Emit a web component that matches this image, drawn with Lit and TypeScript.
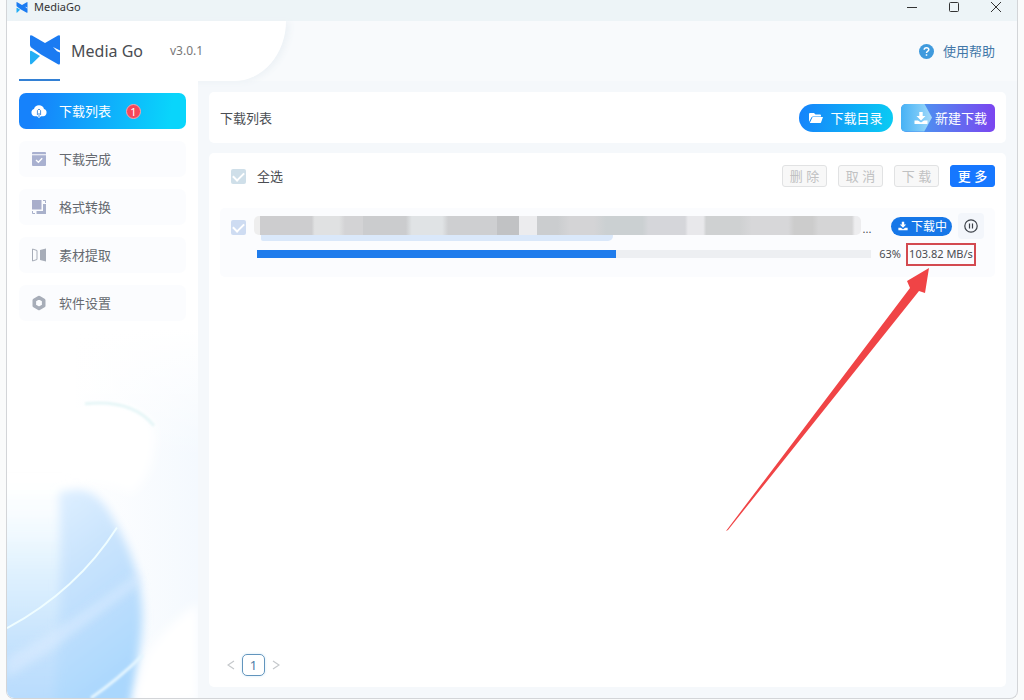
import { LitElement, html, css, svg } from "lit";
import { customElement, state } from "lit/decorators.js";
import { classMap } from "lit/directives/class-map.js";

const logo = (cls: string) => html`
  <svg class=${cls} viewBox="0 0 30 30" aria-hidden="true">
    <path d="M0 1.600Q0 -.6 2 .6L15 8L28 .6Q30 -.6 30 1.600V28Q30 30.400 28 29.200L11 19.500L1.200 12.400Q0 11.500 0 10Z" fill="#1b7bf2" />
    <path d="M0 17Q0 15 1.600 16L10 21L2 28.800Q0 30.400 0 28Z" fill="#22aef5" />
    <path d="M23 12L30 15.600V17.600L27 16.200Z" fill="#fff" />
  </svg>`;

const navIcons = [
  svg`<path d="M3.800 13.200A3.700 3.700 0 0 1 3 6A5.200 5.200 0 0 1 13 6A3.700 3.700 0 0 1 12.200 13.200H10L8 15L6 13.200Z" fill="#fff"/><path d="M6.400 12V7.500Q8 4.500 9.600 7.500V12M8 10V14" fill="none" stroke="#4a90dc" stroke-width="1"/>`,
  svg`<path d="M1 2Q1 1 2 1H14Q15 1 15 2V3.200H1Z" fill="#a9b1d0"/><path d="M1 4.200H15V14Q15 15 14 15H2Q1 15 1 14Z" fill="#a9b1d0"/><path d="M5 9L7.400 11.300L11.200 7.300" fill="none" stroke="#fff" stroke-width="1.400"/>`,
  svg`<path d="M1 1H10.500V10.500H1Z" fill="#a9aecb"/><path d="M12 5H15V15H5.500V12H12Z" fill="#a9b1cb"/><path d="M12 1.500H14.500V4M1.500 12V14.500H4" fill="none" stroke="#a9b1cb" stroke-width="1"/>`,
  svg`<path d="M1.500 2L6 3.500V12.500L1.500 14Z" fill="none" stroke="#a7adb8"/><path d="M9 3L15 1.500V14.500L9 13Z" fill="#a7adb8"/>`,
  svg`<path d="M8 2.500L12.700 5.200V10.800L8 13.500L3.300 10.800V5.200Z" fill="none" stroke="#a7adb8" stroke-width="3.600" stroke-linejoin="round"/>`,
];

const downloadGlyph = html`
  <svg class="glyph" viewBox="0 0 14 14" aria-hidden="true">
    <path d="M5.300 1H8.700V5H11.500L7 9.500L2.500 5H5.300Z" fill="#fff" />
    <path d="M.5 9.500H4L7 11.500L10 9.500H13.500V13H.5Z" fill="#fff" />
  </svg>`;

@customElement("app-root")
export class AppRoot extends LitElement {
  @state() private active = 0;
  private nav = ["下载列表", "下载完成", "格式转换", "素材提取", "软件设置"];
  private percent = 63;
  private fill = 58.5;

  static styles = css`
    :host {
      display: block;
      box-sizing: border-box;
      height: 100vh;
      padding: 0 6px 1px 6px;
      background: #fafbfb;
      color: #4a4d52;
      font: 13px/20px "Noto Sans", "Noto Sans CJK SC", sans-serif;
    }
    * { box-sizing: border-box; }
    button { font: inherit; margin: 0; padding: 0; border: 0; cursor: pointer; white-space: nowrap; }
    svg { display: block; flex: none; }
    .window {
      display: flex; flex-direction: column; height: 100%;
      border: 1px solid #d3d5d8; border-top: 0; border-radius: 0 0 8px 8px;
      background: #f5f8fb; overflow: hidden;
    }
    .titlebar { display: flex; align-items: center; height: 21px; padding: 0 15px 7px 9px; background: #edf4f7; gap: 6px; flex: none; }
    .titlebar h1 { flex: 1; margin: 0; font-size: 11px; line-height: 14px; font-weight: 400; color: #333; }
    .mini { width: 12px; height: 11px; }
    .controls { display: flex; gap: 30px; }
    .controls button { background: none; width: 12px; height: 12px; }
    .controls svg { width: 12px; height: 12px; fill: none; stroke: #333; }
    .header { display: flex; justify-content: space-between; align-items: center; height: 60px; flex: none; background: #f8fafc; padding-right: 22px; }
    .brand {
      display: flex; align-items: center; align-self: stretch; width: 279px; padding-left: 12px;
      background: #fff; border-bottom-right-radius: 52px 60px; box-shadow: 4px 1px 6px #edf2f6;
    }
    .mark { display: flex; justify-content: flex-end; align-items: center; align-self: stretch; width: 41px; border-bottom: 2px solid #3380d4; }
    .logo { width: 30px; height: 30px; }
    .name { font-size: 16px; margin-left: 11px; line-height: 24px; }
    .version { font-size: 12px; margin-left: 27px; color: #777; }
    .help { display: flex; align-items: center; gap: 9px; color: #4277a8; text-decoration: none; }
    .help svg { width: 15px; height: 15px; }
    .body { display: flex; flex: 1; min-height: 0; }
    .side { display: flex; flex-direction: column; width: 191px; flex: none; background: #fff; }
    nav { display: flex; flex-direction: column; gap: 12px; padding: 12px 12px 8px; }
    .item {
      display: flex; align-items: center; gap: 12px; height: 36px; padding: 0 12px; border-radius: 7px;
      background: #fbfcfe; color: #666a70; text-align: left;
    }
    .item.active { background: linear-gradient(100deg, #1682fb 10%, #09d5fb 90%); color: #fff; }
    .item svg { width: 16px; height: 16px; }
    .count {
      width: 15px; height: 15px; margin-left: 3px; border-radius: 50%; background: #f5475a; color: #fff;
      border: 1px solid #f6a5b0; font-size: 11px; line-height: 13px; text-align: center;
    }
    .art { width: 100%; height: 0; flex: 1; }
    main { display: flex; flex-direction: column; gap: 10px; flex: 1; min-width: 0; padding: 11px; }
    .card { background: #fff; border-radius: 5px; }
    .head { display: flex; align-items: center; gap: 8px; height: 51px; padding: 0 11px; flex: none; }
    .head h2 { flex: 1; margin: 0; font-size: 13px; font-weight: 400; }
    .primary { display: flex; align-items: center; justify-content: center; height: 28px; width: 94px; gap: 7px; color: #fff; }
    .glyph { width: 14px; height: 14px; }
    .folder { border-radius: 14px; background: linear-gradient(100deg, #1682fb, #09cdf3); }
    .create {
      border-radius: 5px; background: linear-gradient(90deg, #4e8ff0 25%, #7b45f0);
      position: relative; isolation: isolate; overflow: hidden;
    }
    .create .chevron {
      position: absolute; inset: 0 auto 0 0; width: 31px; z-index: -1;
      background: linear-gradient(90deg, #47b2f5, #7ecbf8 65%, #a5d9fa);
      clip-path: polygon(0 0, 75% 0, 100% 50%, 75% 100%, 0 100%);
    }
    .create { justify-content: flex-end; padding-right: 8px; }
    .list { display: flex; flex-direction: column; flex: 1; padding: 11px; }
    .tools { display: flex; align-items: center; gap: 11px; height: 24px; padding-left: 11px; }
    .all { display: flex; align-items: center; gap: 11px; flex: 1; }
    .check {
      appearance: none; display: grid; place-items: center; width: 15px; height: 15px; margin: 0; flex: none;
      background: #cfdfe9; border-radius: 2px;
    }
    .check::after { content: ""; width: 9px; height: 5px; border: solid #fff; border-width: 0 0 2px 2px; rotate: -45deg; translate: 0 -1px; }
    .row .check { background: #cedcf2; }
    .small { width: 45px; height: 22px; line-height: 20px; border-radius: 3px; border: 1px solid #e1e2e3; background: #f8f8f8; color: #c0c1c2; }
    .small.more { border-color: #1677ff; background: #1677ff; color: #fff; font-weight: 500; }
    .row { display: flex; align-items: flex-start; gap: 8px; margin-top: 20px; padding: 8px 11px; height: 69px; background: #fbfcfe; border-radius: 5px; }
    .row > .check { margin-top: 4px; }
    .info { flex: 1; min-width: 0; }
    .line { display: flex; align-items: center; }
    .title { flex: 1; display: flex; flex-direction: column; min-width: 0; height: 26px; }
    .mosaic {
      height: 19px; border-radius: 5px;
      background: linear-gradient(90deg, #eee 1%, #cdcdcf 1% 9.500%, #e0e1e2 10% 14%, #d3d3d5 15% 18%, #cbccce 18% 25%, #e0e3e5 26% 31%,
        #cecfd1 32% 40%, #c1c2c4 40% 43.700%, #ececee 43.700% 46.700%, #cbcdcf 46.700% 50%, #d4d4d6 52% 56%, #cbd0d2 58% 64%, #d5d6da 65% 71%, #e8e8eb 71.500% 74%,
        #cfd1d2 74.500% 80%, #d7d7d9 82% 88%, #ccc 89% 92%, #d5d5d6 93% 98.500%, #ededef 99%);
    }
    .under { height: 6px; width: 58%; margin-left: 7px; background: #dae8fa; border-radius: 0 0 5px 2px; }
    .dots { width: 12px; margin-right: 18px; text-align: center; font-size: 11px; height: 20px; line-height: 20px; }
    .tag { display: flex; align-items: center; gap: 3px; height: 19px; padding: 0 5px 0 7px; border-radius: 10px; background: #1677e8; color: #fff; font-size: 12px; line-height: 19px; margin-bottom: 6px; }
    .tag .glyph { width: 10px; height: 10px; }
    .pause { display: grid; place-items: center; width: 26px; height: 26px; margin-left: 6px; margin-bottom: 6px; background: #f3f6fb; border-radius: 4px; }
    .pause svg { width: 14px; height: 14px; }
    .line.top { height: 26px; }
    .meter { display: flex; font-size: 11px; line-height: 16px; margin-top: 1px; padding: 0 8px 0 3px; height: 22px; align-items: center; }
    .bar { flex: 1; height: 8px; background: #edeff2; }
    .done { height: 8px; background: #1f7cec; }
    .pct { margin: 0 5px 0 8px; }
    .speed { position: relative; width: 70px; height: 23px; border: 2px solid #d34a50; text-align: center; line-height: 18px; white-space: nowrap; }
    .arrow { position: absolute; right: 45px; top: 21px; width: 208px; height: 266px; pointer-events: none; }
    .pages { display: flex; align-items: center; gap: 7px; margin-top: auto; padding: 0 7px; }
    .pages button { display: grid; place-items: center; height: 22px; background: none; color: #4d7da6; }
    .pages .current { width: 23px; border: 1px solid #6295bd; border-radius: 5px; line-height: 20px; box-shadow: 0 0 3px #d5eaf8; }
    .pages svg { width: 8px; height: 10px; fill: none; stroke: #c5c8cb; stroke-width: 1.200; }
  `;

  private art() {
    return html`
      <svg class="art" viewBox="0 0 191 370" preserveAspectRatio="none" aria-hidden="true">
        <defs>
          <linearGradient id="mist" x1="0" x2="1"><stop offset=".35" stop-color="#f4f9fe" stop-opacity="0" /><stop offset="1" stop-color="#f4f9fe" /></linearGradient>
          <linearGradient id="fade" x1="0" x2="0" y1="0" y2="1"><stop offset="0" stop-color="#fff" /><stop offset=".35" stop-color="#fff" stop-opacity="0" /></linearGradient>
          <linearGradient id="blue" x1="0" x2=".3" y1="0" y2="1"><stop offset="0" stop-color="#e0f0ff" /><stop offset=".4" stop-color="#c8e3fd" /><stop offset="1" stop-color="#aad7fd" /></linearGradient>
          <linearGradient id="veil" x1="0" x2="0" y1="0" y2="1"><stop offset="0" stop-color="#f4fbff" stop-opacity="0" /><stop offset=".35" stop-color="#e3f3fe" /><stop offset=".7" stop-color="#c5e2fd" /><stop offset="1" stop-color="#b4dafd" /></linearGradient>
          <filter id="soft" x="-20%" y="-20%" width="140%" height="140%"><feGaussianBlur stdDeviation="5" /></filter>
          <filter id="faint"><feGaussianBlur stdDeviation="1" /></filter>
        </defs>
        <path d="M0 0H191V370H0Z" fill="url(#mist)" />
        <path d="M0 0H191V370H0Z" fill="url(#fade)" />
        <path d="M60 82Q125 62 147 98Q152 140 125 165Q70 140 0 160V80Z" fill="#fff" filter="url(#soft)" />
        <path d="M78 75Q125 70 147 97" fill="none" stroke="#e6f6f7" stroke-width="3" filter="url(#faint)" />
        <path d="M-20 150H62V390H-20Z" fill="url(#veil)" filter="url(#soft)" />
        <path d="M52 165Q86 150 106 190Q142 250 134 310L124 385H46Q56 270 52 165Z" fill="url(#blue)" filter="url(#soft)" />
        <path d="M0 330Q70 290 132 244V256Q80 295 40 325L0 350Z" fill="#dcecff" opacity=".6" filter="url(#soft)" />
        <path d="M0 300Q70 262 110 199" fill="none" stroke="#effdff" stroke-width="2" />
        <path d="M126 374L140 326Q160 295 191 275V374Z" fill="#fff" filter="url(#soft)" />
        <path d="M84 370Q110 352 136 327" fill="none" stroke="#e5f6ff" stroke-width="3" filter="url(#faint)" />
      </svg>`;
  }

  render() {
    return html`
      <div class="window">
        <div class="titlebar">
          ${logo("mini")}
          <h1>MediaGo</h1>
          <div class="controls">
            <button aria-label="最小化"><svg viewBox="0 0 12 12"><path d="M1 6.500H11" /></svg></button>
            <button aria-label="最大化"><svg viewBox="0 0 12 12"><rect x="1.500" y="1.500" width="9" height="9" rx="1" /></svg></button>
            <button aria-label="关闭"><svg viewBox="0 0 12 12"><path d="M1 1L11 11M11 1L1 11" /></svg></button>
          </div>
        </div>
        <header class="header">
          <div class="brand">
            <span class="mark">${logo("logo")}</span>
            <span class="name">Media Go</span>
            <span class="version">v3.0.1</span>
          </div>
          <a class="help" href="#">
            <svg viewBox="0 0 15 15" aria-hidden="true">
              <circle cx="7.500" cy="7.500" r="7.500" fill="#3f9add" />
              <path d="M5.200 5.800Q5.300 3.700 7.500 3.700T9.800 5.700Q9.800 6.700 8.500 7.300Q7.500 7.800 7.500 9M7.500 10.300V11.800" fill="none" stroke="#fff" stroke-width="1.500" />
            </svg>
            使用帮助
          </a>
        </header>
        <div class="body">
          <aside class="side">
            <nav>
              ${this.nav.map((label, i) => html`
                <button class=${classMap({ item: true, active: this.active === i })} @click=${() => (this.active = i)}>
                  <svg viewBox="0 0 16 16" aria-hidden="true">${navIcons[i]}</svg>
                  <span>${label}</span>
                  ${i === 0 ? html`<span class="count">1</span>` : ""}
                </button>`)}
            </nav>
            ${this.art()}
          </aside>
          <main>
            <section class="card head">
              <h2>下载列表</h2>
              <button class="primary folder">
                <svg class="glyph" viewBox="0 0 14 14" aria-hidden="true"><path d="M0 11V3Q0 2 1 2H5L6.500 3.500H11Q12 3.500 12 4.500V5.500H4Q3 5.500 2.500 6.300Z" fill="#fff" /><path d="M3.600 6H14L12 11.500Q11.700 12 11 12H.8Z" fill="#fff" /></svg>
                下载目录
              </button>
              <button class="primary create"><span class="chevron"></span>${downloadGlyph}新建下载</button>
            </section>
            <section class="card list">
              <div class="tools">
                <label class="all"><input class="check" type="checkbox" checked />全选</label>
                <button class="small" disabled>删 除</button>
                <button class="small" disabled>取 消</button>
                <button class="small" disabled>下 载</button>
                <button class="small more">更 多</button>
              </div>
              <article class="row">
                <input class="check" type="checkbox" checked aria-label="选择任务" />
                <div class="info">
                  <div class="line top">
                    <div class="title"><div class="mosaic"></div><div class="under"></div></div>
                    <span class="dots">...</span>
                    <span class="tag">${downloadGlyph}下载中</span>
                    <button class="pause" aria-label="暂停">
                      <svg viewBox="0 0 14 14"><circle cx="7" cy="7" r="6.200" fill="none" stroke="#3c4148" stroke-width="1.200" /><path d="M5.500 4.500V9.500M8.500 4.500V9.500" stroke="#3c4148" stroke-width="1.200" /></svg>
                    </button>
                  </div>
                  <div class="meter">
                    <div class="bar" role="progressbar" aria-valuenow=${this.percent}><div class="done" style="width:${this.fill}%"></div></div>
                    <span class="pct">${this.percent}%</span>
                    <span class="speed">103.82 MB/s
                      <svg class="arrow" viewBox="0 0 208 266" aria-hidden="true"><path d="M5 265L189 22L186 15L208 2L204 27L198 25L7 264Z" fill="#f04446" /></svg>
                    </span>
                  </div>
                </div>
              </article>
              <div class="pages">
                <button aria-label="上一页"><svg viewBox="0 0 8 10"><path d="M7 1L1 5L7 9" /></svg></button>
                <button class="current">1</button>
                <button aria-label="下一页"><svg viewBox="0 0 8 10"><path d="M1 1L7 5L1 9" /></svg></button>
              </div>
            </section>
          </main>
        </div>
      </div>`;
  }
}
